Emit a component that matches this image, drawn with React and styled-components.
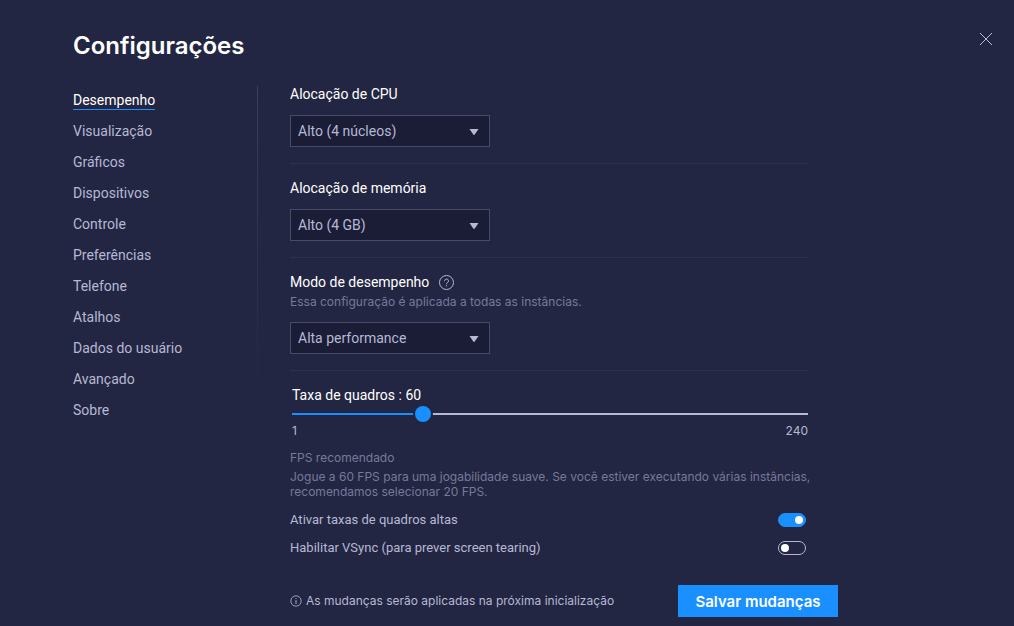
import React, { useState } from "react";
import styled, { createGlobalStyle, ThemeProvider } from "styled-components";

const theme = {
  bg: "#232642",
  field: "#1b1d37",
  border: "#474b6b",
  line: "#2d304e",
  text: "#ffffff",
  soft: "#b6b8d4",
  muted: "#76799a",
  accent: "#1a8fff",
  display: 'Inter, "Liberation Sans", sans-serif',
};

const GlobalStyle = createGlobalStyle`
  *, *::before, *::after { box-sizing: border-box; }
  html { background: ${theme.bg}; }
  body { margin: 0; }
  body, button, input, select {
    font-family: Roboto, "Liberation Sans", sans-serif;
    font-size: 14px;
  }
`;

const Page = styled.div`
  min-height: 100vh;
  padding: 30px 20px 9px 73px;
  background: ${(p) => p.theme.bg};
  color: ${(p) => p.theme.text};
`;

const Header = styled.header`
  display: flex;
  justify-content: space-between;
  align-items: flex-start;
`;

const Title = styled.h1`
  margin: 0;
  font-family: ${(p) => p.theme.display};
  font-size: 24px;
  font-weight: 600;
  line-height: 32px;
`;

const CloseButton = styled.button`
  display: flex;
  padding: 2px 1px;
  border: 0;
  background: none;
  color: ${(p) => p.theme.soft};
  cursor: pointer;
`;

const Body = styled.div`
  display: flex;
  margin-top: 22px;
`;

const Sidebar = styled.nav`
  flex: 0 0 184px;
  padding-top: 7px;
`;

const NavList = styled.ul`
  display: flex;
  flex-direction: column;
  align-items: flex-start;
  gap: 12px;
  margin: 0;
  padding: 0;
  list-style: none;
`;

const NavLink = styled.a`
  display: block;
  border-bottom: 1px solid ${(p) => (p.$active ? p.theme.accent : "transparent")};
  color: ${(p) => (p.$active ? p.theme.text : p.theme.soft)};
  line-height: 18px;
  text-decoration: none;
`;

const Divider = styled.div`
  flex: 0 0 1px;
  height: 320px;
  margin-top: 2px;
  background: linear-gradient(#3a3d5c, ${(p) => p.theme.bg});
`;

const Main = styled.main`
  flex: 1;
  min-width: 0;
  max-width: 580px;
  padding-left: 32px;
`;

const Panel = styled.div`
  padding-right: 30px;
`;

const Section = styled.section`
  margin-bottom: 14px;
  padding-bottom: 16px;
  border-bottom: 1px solid ${(p) => p.theme.line};
`;

const LabelRow = styled.div`
  display: flex;
  align-items: center;
  gap: 9px;
  line-height: 20px;
`;

const HelpButton = styled.button`
  display: flex;
  padding: 0;
  border: 0;
  background: none;
  color: ${(p) => p.theme.soft};
  cursor: pointer;
`;

const Hint = styled.p`
  margin: 2px 0 0;
  color: ${(p) => p.theme.muted};
  font-family: ${(p) => p.theme.display};
  font-size: 12px;
  line-height: 16px;
`;

const SelectBox = styled.div`
  position: relative;
  width: 200px;
  margin-top: ${(p) => (p.$afterHint ? "12px" : "11px")};
`;

const Select = styled.select`
  display: block;
  width: 100%;
  height: 32px;
  padding: 0 32px 0 7px;
  border: 1px solid ${(p) => p.theme.border};
  border-radius: 0;
  background: ${(p) => p.theme.field};
  color: ${(p) => p.theme.soft};
  appearance: none;
`;

const Arrow = styled.svg`
  position: absolute;
  top: 14px;
  right: 11px;
  pointer-events: none;
`;

const SliderGroup = styled.div`
  padding-left: 2px;
`;

const Slider = styled.input`
  display: block;
  width: 100%;
  height: 18px;
  margin: 0;
  background: none;
  appearance: none;
  cursor: pointer;

  &::-webkit-slider-runnable-track {
    height: 2px;
    background: linear-gradient(
      to right,
      ${(p) => p.theme.accent} var(--fill),
      ${(p) => p.theme.soft} var(--fill)
    );
  }

  &::-webkit-slider-thumb {
    width: 16px;
    height: 16px;
    margin-top: -7px;
    border-radius: 50%;
    background: ${(p) => p.theme.accent};
    box-shadow: 0 0 0 2px ${(p) => p.theme.bg};
    appearance: none;
  }
`;

const Bounds = styled.div`
  display: flex;
  justify-content: space-between;
  color: ${(p) => p.theme.soft};
  font-family: ${(p) => p.theme.display};
  font-size: 12px;
  line-height: 16px;
`;

const Advice = styled.div`
  margin: 11px -10px 13px 0;
  color: ${(p) => p.theme.muted};
  font-family: ${(p) => p.theme.display};
  font-size: 12px;
  line-height: 15px;

  p {
    margin: 4px 0 0;
  }
`;

const ToggleList = styled.div`
  display: flex;
  flex-direction: column;
  gap: 12px;
  padding-right: 2px;
`;

const ToggleRow = styled.label`
  display: flex;
  justify-content: space-between;
  align-items: center;
  color: ${(p) => p.theme.soft};
  font-size: 13px;
  line-height: 16px;
`;

const Switch = styled.input`
  display: flex;
  align-items: center;
  width: 28px;
  height: 14px;
  margin: 0;
  padding: 0 2px;
  border: 1px solid ${(p) => p.theme.soft};
  border-radius: 7px;
  appearance: none;
  cursor: pointer;

  &::before {
    content: "";
    width: 8px;
    height: 8px;
    border-radius: 50%;
    background: #ffffff;
  }

  &:checked {
    justify-content: flex-end;
    border-color: ${(p) => p.theme.accent};
    background: ${(p) => p.theme.accent};
  }
`;

const Footer = styled.footer`
  display: flex;
  justify-content: space-between;
  align-items: center;
  margin-top: 29px;
`;

const Notice = styled.p`
  display: flex;
  align-items: center;
  gap: 4px;
  margin: 0;
  color: ${(p) => p.theme.soft};
  font-family: ${(p) => p.theme.display};
  font-size: 12px;
  line-height: 16px;
`;

const SaveButton = styled.button`
  width: 160px;
  height: 32px;
  padding: 0;
  border: 0;
  background: ${(p) => p.theme.accent};
  color: #ffffff;
  font-family: ${(p) => p.theme.display};
  font-size: 15px;
  font-weight: 600;
  white-space: nowrap;
  cursor: pointer;
`;

const navItems = [
  "Desempenho",
  "Visualização",
  "Gráficos",
  "Dispositivos",
  "Controle",
  "Preferências",
  "Telefone",
  "Atalhos",
  "Dados do usuário",
  "Avançado",
  "Sobre",
];

function SelectField({ id, label, value, hint, help }) {
  return (
    <Section>
      <LabelRow>
        <label htmlFor={id}>{label}</label>
        {help && (
          <HelpButton type="button" aria-label="Ajuda">
            <svg width="16" height="16" viewBox="0 0 16 16" fill="none" stroke="currentColor">
              <circle cx="8.5" cy="8.5" r="7" />
              <path d="M6.5 7.2c0-1.3.8-2.1 2-2.1s2 .8 2 1.9c0 1.5-2 1.6-2 3.2" />
              <path d="M8.5 11.2v1.1" />
            </svg>
          </HelpButton>
        )}
      </LabelRow>
      {hint && <Hint>{hint}</Hint>}
      <SelectBox $afterHint={Boolean(hint)}>
        <Select id={id} defaultValue={value}>
          <option>{value}</option>
        </Select>
        <Arrow width="10" height="6" viewBox="0 0 10 6" aria-hidden="true">
          <path d="M0.5 0h9L5.7 5.6a.9.9 0 0 1-1.4 0z" fill={theme.soft} />
        </Arrow>
      </SelectBox>
    </Section>
  );
}

export default function App() {
  const [fps, setFps] = useState(60);
  const fill = `${((fps - 1) / 239) * 100}%`;

  return (
    <ThemeProvider theme={theme}>
      <GlobalStyle />
      <Page>
        <Header>
          <Title>Configurações</Title>
          <CloseButton type="button" aria-label="Fechar">
            <svg width="14" height="14" viewBox="0 0 14 14" fill="none" stroke="currentColor">
              <path d="M1 1l12 12M13 1L1 13" />
            </svg>
          </CloseButton>
        </Header>
        <Body>
          <Sidebar>
            <NavList>
              {navItems.map((item, i) => (
                <li key={item}>
                  <NavLink href="#" $active={i === 0}>
                    {item}
                  </NavLink>
                </li>
              ))}
            </NavList>
          </Sidebar>
          <Divider />
          <Main>
            <Panel>
              <SelectField id="cpu" label="Alocação de CPU" value="Alto (4 núcleos)" />
              <SelectField id="memory" label="Alocação de memória" value="Alto (4 GB)" />
              <SelectField
                id="mode"
                label="Modo de desempenho"
                value="Alta performance"
                hint="Essa configuração é aplicada a todas as instâncias."
                help
              />
              <SliderGroup>
                <LabelRow>
                  <label htmlFor="fps">Taxa de quadros : {fps}</label>
                </LabelRow>
                <Slider
                  id="fps"
                  type="range"
                  min="1"
                  max="240"
                  value={fps}
                  onChange={(e) => setFps(Number(e.target.value))}
                  style={{ "--fill": fill }}
                />
                <Bounds>
                  <span>1</span>
                  <span>240</span>
                </Bounds>
              </SliderGroup>
              <Advice>
                FPS recomendado
                <p>
                  Jogue a 60 FPS para uma jogabilidade suave. Se você estiver executando várias
                  instâncias, recomendamos selecionar 20 FPS.
                </p>
              </Advice>
              <ToggleList>
                <ToggleRow>
                  Ativar taxas de quadros altas
                  <Switch type="checkbox" role="switch" defaultChecked />
                </ToggleRow>
                <ToggleRow>
                  Habilitar VSync (para prever screen tearing)
                  <Switch type="checkbox" role="switch" />
                </ToggleRow>
              </ToggleList>
            </Panel>
            <Footer>
              <Notice>
                <svg width="12" height="12" viewBox="0 0 12 12" fill="none" stroke="currentColor">
                  <circle cx="6" cy="6" r="5.2" strokeWidth="0.8" />
                  <path d="M6 5v4M6 3v1" strokeWidth="0.9" />
                </svg>
                As mudanças serão aplicadas na próxima inicialização
              </Notice>
              <SaveButton type="button">Salvar mudanças</SaveButton>
            </Footer>
          </Main>
        </Body>
      </Page>
    </ThemeProvider>
  );
}
